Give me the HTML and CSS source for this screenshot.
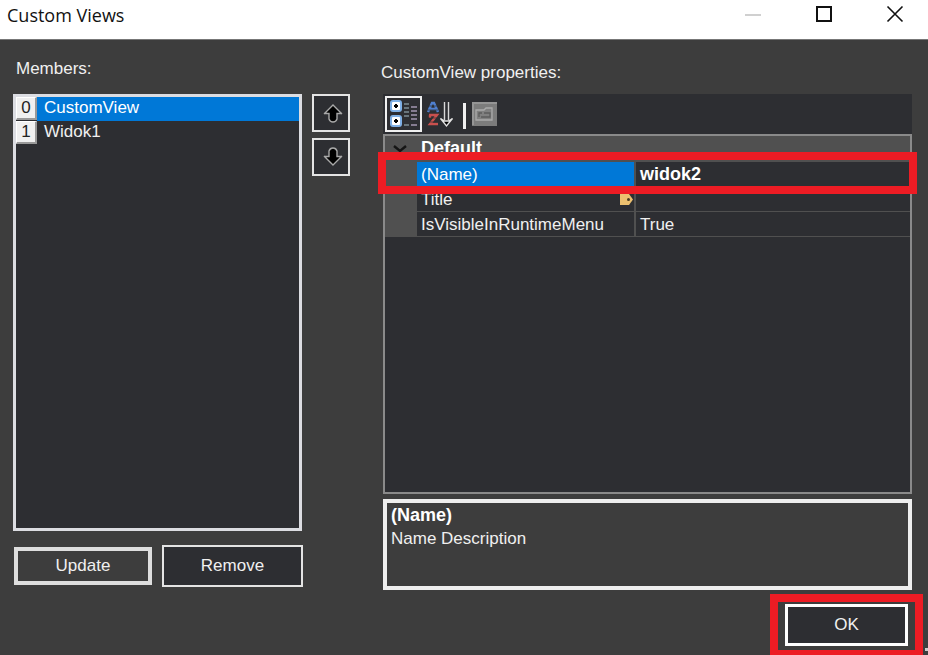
FILE: index.html
```html
<!DOCTYPE html>
<html lang="en">

<head>
    <meta charset="UTF-8">
    <meta name="viewport" content="width=device-width, initial-scale=1.0">
    <title>Custom Views</title>
    <link rel="stylesheet" href="styles.css">
</head>

<body>
    <div class="dialog">
        <header class="titlebar">
            <h1>Custom Views</h1>
            <div class="window-buttons">
                <button type="button" aria-label="Minimize" disabled>
                    <svg width="18" height="18" viewBox="0 0 18 18"><path d="M1 10h16" stroke="#d0d0d0" stroke-width="2"/></svg>
                </button>
                <button type="button" aria-label="Maximize">
                    <svg width="18" height="18" viewBox="0 0 18 18"><rect x="2" y="2" width="14" height="14" fill="none" stroke="#111" stroke-width="2"/></svg>
                </button>
                <button type="button" aria-label="Close">
                    <svg width="18" height="18" viewBox="0 0 18 18"><path d="M1.5 1.5l15 15M16.5 1.5l-15 15" stroke="#111" stroke-width="1.6"/></svg>
                </button>
            </div>
        </header>

        <main class="content">
            <!-- list of views -->
            <section class="members">
                <h2>Members:</h2>
                <div class="members-row">
                    <ul class="list" role="listbox" aria-label="Members">
                        <li class="selected" role="option" aria-selected="true"><span class="index">0</span><span class="name">CustomView</span></li>
                        <li role="option" aria-selected="false"><span class="index">1</span><span class="name">Widok1</span></li>
                    </ul>
                    <div class="order">
                        <button type="button" aria-label="Move up">
                            <svg width="20" height="20" viewBox="0 0 20 20">
                                <path d="M10 2L18 10h-4v6q-1 3-4 3t-4-3v-6H2z" fill="#000"/>
                                <path d="M1 11l9-9 9 9M1 10.5h5V16q1 3 4 3t4-3v-5.5h5" fill="none" stroke="#a8a8a8" stroke-width="1.4"/>
                            </svg>
                        </button>
                        <button type="button" aria-label="Move down">
                            <svg width="20" height="20" viewBox="0 0 20 20">
                                <path d="M10 18L18 10h-4V4q-1-3-4-3T6 4v6H2z" fill="#000"/>
                                <path d="M1 9l9 9 9-9M1 9.5h5V4q1-3 4-3t4 3v5.5h5" fill="none" stroke="#a8a8a8" stroke-width="1.4"/>
                            </svg>
                        </button>
                    </div>
                </div>
                <div class="actions">
                    <button type="button" class="update">Update</button>
                    <button type="button" class="remove">Remove</button>
                </div>
            </section>

            <!-- property grid -->
            <section class="properties">
                <h2>CustomView properties:</h2>
                <div class="toolbar">
                    <button type="button" class="active" aria-label="Categorized">
                        <svg width="30" height="30" viewBox="0 0 30 30">
                            <rect x="2" y="2" width="10" height="10" rx="2" fill="#fff" stroke="#7fb0e6" stroke-width="2"/>
                            <rect x="2" y="17" width="10" height="10" rx="2" fill="#fff" stroke="#7fb0e6" stroke-width="2"/>
                            <path d="M7 5v4M5 7h4M7 20v4M5 22h4" stroke="#000" stroke-width="2"/>
                            <path d="M15 5h5M15 9h5M15 13h5M15 17h5M15 26h5" stroke="#68757c" stroke-width="2"/>
                            <path d="M22 8h6M22 12h6M22 16h6M22 20h6M22 26h6" stroke="#857c91" stroke-width="2"/>
                        </svg>
                    </button>
                    <button type="button" aria-label="Alphabetical">
                        <svg width="28" height="28" viewBox="0 0 28 28">
                            <path d="M2 12l4-9h2l4 9M3 9h7" fill="none" stroke="#5080d0" stroke-width="2.4"/>
                            <path d="M3 15h8l-7 9h8M4 15v3" fill="none" stroke="#c9504e" stroke-width="2.4"/>
                            <path d="M1 6h11M1 10h11M1 18h11M1 22h11" stroke="#2d2e32" stroke-width=".7"/>
                            <path d="M18.500 2v18M22.500 2v18" stroke="#d8d8d8" stroke-width="1.4"/>
                            <path d="M14.500 18.500l6 7.500 6-7.500-4 2.500h-4z" fill="#000" stroke="#e4e4e4" stroke-width="1.3"/>
                        </svg>
                    </button>
                    <span class="separator"></span>
                    <button type="button" aria-label="Property pages" disabled>
                        <svg width="25" height="24" viewBox="0 0 25 24">
                            <path d="M0 0h25v24H0z" fill="#7c7c7c"/>
                            <path d="M1 23V1h24" fill="none" stroke="#959595" stroke-width="2"/>
                            <path d="M4 18V8h8l2-2h6v12z" fill="#808080" stroke="#aaa" stroke-width="1.3"/>
                            <path d="M7 15v-4h3M12 11h6v4H9" fill="none" stroke="#5c5c5c" stroke-width="1.3"/>
                        </svg>
                    </button>
                </div>
                <div class="grid">
                    <table>
                        <colgroup>
                            <col class="col-gutter">
                            <col class="col-name">
                            <col>
                        </colgroup>
                        <tbody>
                            <tr class="category">
                                <th class="gutter"><svg width="14" height="8" viewBox="0 0 14 8"><path d="M1 1l6 5 6-5" fill="none" stroke="#151515" stroke-width="2.4"/></svg></th>
                                <th colspan="2">Default</th>
                            </tr>
                            <tr class="selected">
                                <td class="gutter"></td>
                                <th scope="row">(Name)</th>
                                <td><b>widok2</b></td>
                            </tr>
                            <tr>
                                <td class="gutter"></td>
                                <th scope="row"><span class="with-tag">Title <svg width="13" height="11" viewBox="0 0 13 11"><path d="M0 0h9l4 5.500L9 11H0z" fill="#ecc06f"/><circle cx="8.500" cy="5.500" r="1.500" fill="#4a3c22"/></svg></span></th>
                                <td></td>
                            </tr>
                            <tr>
                                <td class="gutter"></td>
                                <th scope="row">IsVisibleInRuntimeMenu</th>
                                <td>True</td>
                            </tr>
                        </tbody>
                    </table>
                    <div class="row-highlight"></div>
                </div>
                <div class="description">
                    <strong>(Name)</strong>
                    <p>Name Description</p>
                </div>
            </section>
        </main>

        <footer>
            <div class="ok-highlight">
                <button type="button">OK</button>
            </div>
        </footer>
        <span class="grip"></span>
    </div>
</body>

</html>
```

FILE: styles.css
```css
* {
    box-sizing: border-box;
}

body {
    margin: 0;
    background: #3d3d3d;
    color: #f0f0f0;
    font-family: "Liberation Sans", Arial, sans-serif;
    font-size: 17px;
    line-height: 24px;
}

.dialog {
    position: relative;
    display: flex;
    flex-direction: column;
    min-height: 100vh;
}

button {
    display: flex;
    align-items: center;
    justify-content: center;
    padding: 0;
    border: none;
    background: #2d2e32;
    color: #f0f0f0;
    font: inherit;
}

svg {
    display: block;
}

h2 {
    margin: 0;
    font-size: 17px;
    font-weight: normal;
}

b,
strong {
    color: #fff;
    font-size: 18px;
}

/* title bar */
.titlebar {
    display: flex;
    justify-content: space-between;
    align-items: flex-start;
    height: 40px;
    padding: 4px 0 0 7px;
    background: #fff;
    border-bottom: 1px solid #777;
}

.titlebar h1 {
    margin: 0;
    color: #111;
    font-family: "Open Sans", "Noto Sans", sans-serif;
    font-size: 18px;
    line-height: 22px;
    font-weight: normal;
}

.window-buttons {
    display: flex;
}

.window-buttons button {
    width: 71px;
    height: 20px;
    padding-left: 5px;
    background: none;
}

/* two columns */
.content {
    flex: 1;
    display: grid;
    grid-template-columns: 337px 1fr;
    gap: 33px;
    padding: 0 16px 0 13px;
}

.members,
.properties {
    display: flex;
    flex-direction: column;
}

.members {
    padding: 17px 0 3px;
}

.members h2 {
    padding: 0 3px;
    margin-bottom: 13px;
}

.members-row {
    flex: 1;
    display: flex;
    gap: 10px;
}

.list {
    flex: 1;
    margin: 0;
    padding: 0;
    list-style: none;
    background: #2d2e32;
    border: 3px solid #dcdde2;
}

.list li {
    display: flex;
    height: 24px;
}

.list .index {
    width: 21px;
    height: 23px;
    background: #f0f0f0;
    border: 1px solid #fff;
    border-right: 2px solid #999;
    border-bottom: 2px solid #999;
    color: #222;
    line-height: 20px;
    text-align: center;
}

.list .name {
    flex: 1;
    padding-left: 7px;
    line-height: 22px;
}

.list .selected .name {
    background: #0078d7;
    color: #fff;
}

.order {
    display: flex;
    flex-direction: column;
    gap: 6px;
}

.order button {
    width: 38px;
    height: 38px;
    padding-left: 4px;
    border: 2px solid #e4e4e4;
}

.actions {
    display: flex;
    align-items: center;
    gap: 10px;
    margin-top: 14px;
    padding-right: 47px;
}

.actions .update {
    flex: 1;
    height: 38px;
    margin-left: 1px;
    background: #3d3d3d;
    border: 4px solid #dedede;
}

.actions .remove {
    width: 141px;
    height: 42px;
    border: 2px solid #e4e4e4;
}

/* property grid */
.properties {
    padding-top: 21px;
}

.properties h2 {
    margin: 0 -2px 9px;
}

.toolbar {
    display: flex;
    align-items: center;
    height: 40px;
    padding: 0 2px;
    background: #2d2e32;
}

.toolbar .active {
    width: 37px;
    height: 36px;
    margin-right: 4px;
    border: 2px solid #f0f0f0;
}

.separator {
    width: 3px;
    height: 26px;
    margin: 3px 6px 0 9px;
    background: #f0f0f0;
}

.grid {
    position: relative;
    flex: 1;
    background: #2d2e32;
    border: 2px solid #8a8a8a;
}

.grid table {
    width: 100%;
    border-collapse: collapse;
    table-layout: fixed;
}

.col-gutter {
    width: 32px;
}

.col-name {
    width: 218px;
}

.grid th,
.grid td {
    height: 25px;
    padding: 1px 4px 0;
    border-bottom: 1px solid #505050;
    font-weight: normal;
    line-height: 23px;
    text-align: left;
}

.grid th[scope] {
    border-right: 2px solid #505050;
}

.grid .category th {
    background: #505050;
    color: #fff;
    font-size: 18px;
    font-weight: bold;
}

.grid .gutter {
    padding: 1px 8px 0;
    background: #505050;
}

.grid .selected th {
    background: #0078d7;
    color: #fff;
}

.with-tag {
    display: flex;
    align-items: center;
    justify-content: space-between;
    margin-right: -3px;
}

/* red frame over the edited row */
.row-highlight {
    position: absolute;
    top: 16px;
    left: -7px;
    right: -7px;
    height: 42px;
    border: 8px solid #ed1c24;
}

.description {
    height: 91px;
    margin-top: 5px;
    padding: 0 4px;
    border: 4px solid #eee;
}

.description strong {
    display: block;
}

.description p {
    margin: 0;
}

/* ok button */
footer {
    display: flex;
    justify-content: flex-end;
    padding: 4px 5px 0;
}

.ok-highlight {
    padding: 2px 7px 4px;
    border: 8px solid #ed1c24;
    border-bottom-width: 5px;
}

.ok-highlight button {
    width: 123px;
    height: 42px;
    border: 3px solid #fff;
}

.grip {
    position: absolute;
    right: 0;
    bottom: 4px;
    width: 3px;
    height: 3px;
    background: #ccc;
}
```
